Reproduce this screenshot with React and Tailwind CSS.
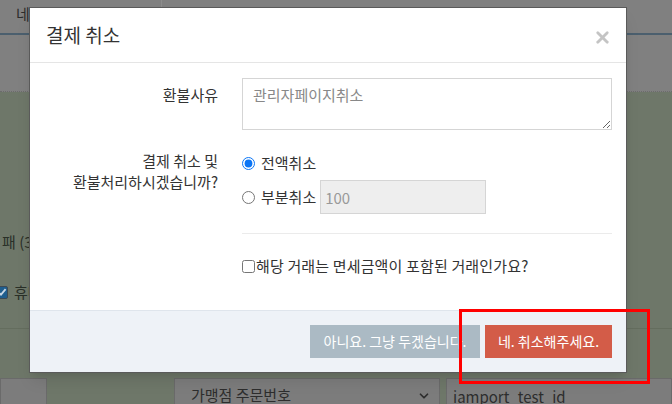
import { X, ChevronDown } from 'lucide-react';

const font = { fontFamily: '"Noto Sans CJK KR", "Noto Sans", sans-serif' };

function Backdrop() {
    return (
        <div className="flex flex-col w-[672px] h-[404px] bg-[#6e7769]">
            {/* top tab area (dimmed white) */}
            <div className="h-[105px] bg-[#808080] flex flex-col">
                <div className="h-[33px] flex">
                    <div className="w-[162px] border-r border-[#8c8c8c] pl-[16px] pt-[3px] text-[15px] text-[#2c2c2c]">네이버페이 결제 취소</div>
                </div>
                <div className="h-[2px] bg-[#4b5f6e]" />
                <div className="h-[57px] border-b border-dotted border-[#6c6c6c]" />
            </div>
            {/* greenish content area */}
            <div className="flex-1 flex flex-col">
                <div className="mt-[140px] pl-[2px] text-[15px] leading-[20px] text-[#2a3028]">패 (3건)</div>
                <div className="mt-[29px] flex items-center gap-[6px] -ml-[5px]">
                    <span className="w-[13px] h-[13px] rounded-[2px] bg-[#1f5e8e] border border-[#3d4a55] flex items-center justify-center">
                        <svg width="10" height="10" viewBox="0 0 10 10"><path d="M1.5 5.2 L4 7.6 L8.6 2.2" stroke="#c9d8e6" strokeWidth="1.8" fill="none" /></svg>
                    </span>
                    <span className="text-[15px] text-[#2a3028]">휴대폰</span>
                </div>
                <div className="mt-[24px] h-px bg-[#646d5e]" />
                <div className="mt-[49px] flex">
                    <div className="w-[47px] h-[30px] bg-[#7c7c7c] border border-[#6a6a6a]" />
                    <div className="ml-[127px] w-[266px] h-[30px] bg-[#7c7c7c] border border-[#6a6a6a] flex items-center justify-between pl-[16px] pr-[8px] pt-[6px]">
                        <span className="text-[15px] text-[#2d2d2d]">가맹점 주문번호</span>
                        <ChevronDown size={14} strokeWidth={3} className="text-[#2d2d2d]" />
                    </div>
                    <div className="ml-[6px] flex-1 h-[30px] bg-[#7c7c7c] border border-[#6a6a6a] pl-[6px] pt-[5px]">
                        <span className="text-[15px] text-[#2d2d2d]">iamport_test_id</span>
                    </div>
                </div>
            </div>
        </div>
    );
}

function CancelModal() {
    return (
        <div className="absolute left-[29px] top-[7px] w-[598px] h-[366px] bg-white border border-[#5a5a5a] shadow-lg flex flex-col text-[#333]">
            <div className="h-[55px] shrink-0 border-b border-[#e5e5e5] flex items-center justify-between pl-[16px] pr-[14px]">
                <h4 className="text-[19px] text-[#333] pt-[1px]">결제 취소</h4>
                <X size={19} strokeWidth={3.5} className="text-[#c4c4c4] mt-[4px]" />
            </div>

            <div className="flex-1 px-[14px] pt-[15px] text-[15px]">
                <div className="flex">
                    <label className="w-[174px] text-right pt-[6px] leading-[21px]">환불사유</label>
                    <div className="ml-[24px] flex-1">
                        <textarea
                            readOnly
                            defaultValue="관리자페이지취소"
                            className="block w-full h-[52px] border border-[#d5d5d5] px-[10px] py-[5px] text-[15px] leading-[21px] text-[#888] resize-y outline-none"
                            style={font}
                        />
                    </div>
                </div>

                <div className="flex mt-[20px]">
                    <label className="w-[174px] text-right leading-[21px]">
                        결제 취소 및<br />환불처리하시겠습니까?
                    </label>
                    <div className="ml-[24px] flex-1">
                        <div className="flex items-center gap-[6px] h-[21px] mt-[3px]">
                            <input type="radio" name="refund" defaultChecked className="m-0 w-[13px] h-[13px] accent-[#0b75f5]" />
                            <span>전액취소</span>
                        </div>
                        <div className="flex items-center gap-[4px] mt-[6px]">
                            <input type="radio" name="refund" className="m-0 w-[13px] h-[13px]" />
                            <span className="ml-[2px]">부분취소</span>
                            <input
                                readOnly
                                defaultValue="100"
                                className="w-[166px] h-[34px] bg-[#eeeeee] border border-[#d5d5d5] px-[4px] text-[15px] text-[#999] outline-none"
                                style={font}
                            />
                        </div>
                        <div className="mt-[19px] h-px bg-[#ebebeb]" />
                        <div className="mt-[21px] flex items-center">
                            <input type="checkbox" className="m-0 w-[13px] h-[13px]" />
                            <span className="ml-px tracking-[0.15px]">해당 거래는 면세금액이 포함된 거래인가요?</span>
                        </div>
                    </div>
                </div>
            </div>

            <div className="h-[62px] shrink-0 bg-[#eef2f7] border-t border-[#dfe5ec] flex items-center justify-end gap-[5px] pr-[14px] text-[14px] text-white">
                <button className="w-[170px] h-[33px] bg-[#abbac4]">아니요. 그냥 두겠습니다.</button>
                <button className="w-[127px] h-[33px] bg-[#d35c48]">네. 취소해주세요.</button>
            </div>
        </div>
    );
}

export default function App() {
    return (
        <div className="relative w-[672px] h-[404px] overflow-hidden" style={font}>
            <Backdrop />
            <CancelModal />
            {/* highlight box drawn over the screenshot */}
            <div className="absolute left-[459px] top-[309px] w-[191px] h-[75px] border-[3px] border-[#ff0000]" />
        </div>
    );
}
